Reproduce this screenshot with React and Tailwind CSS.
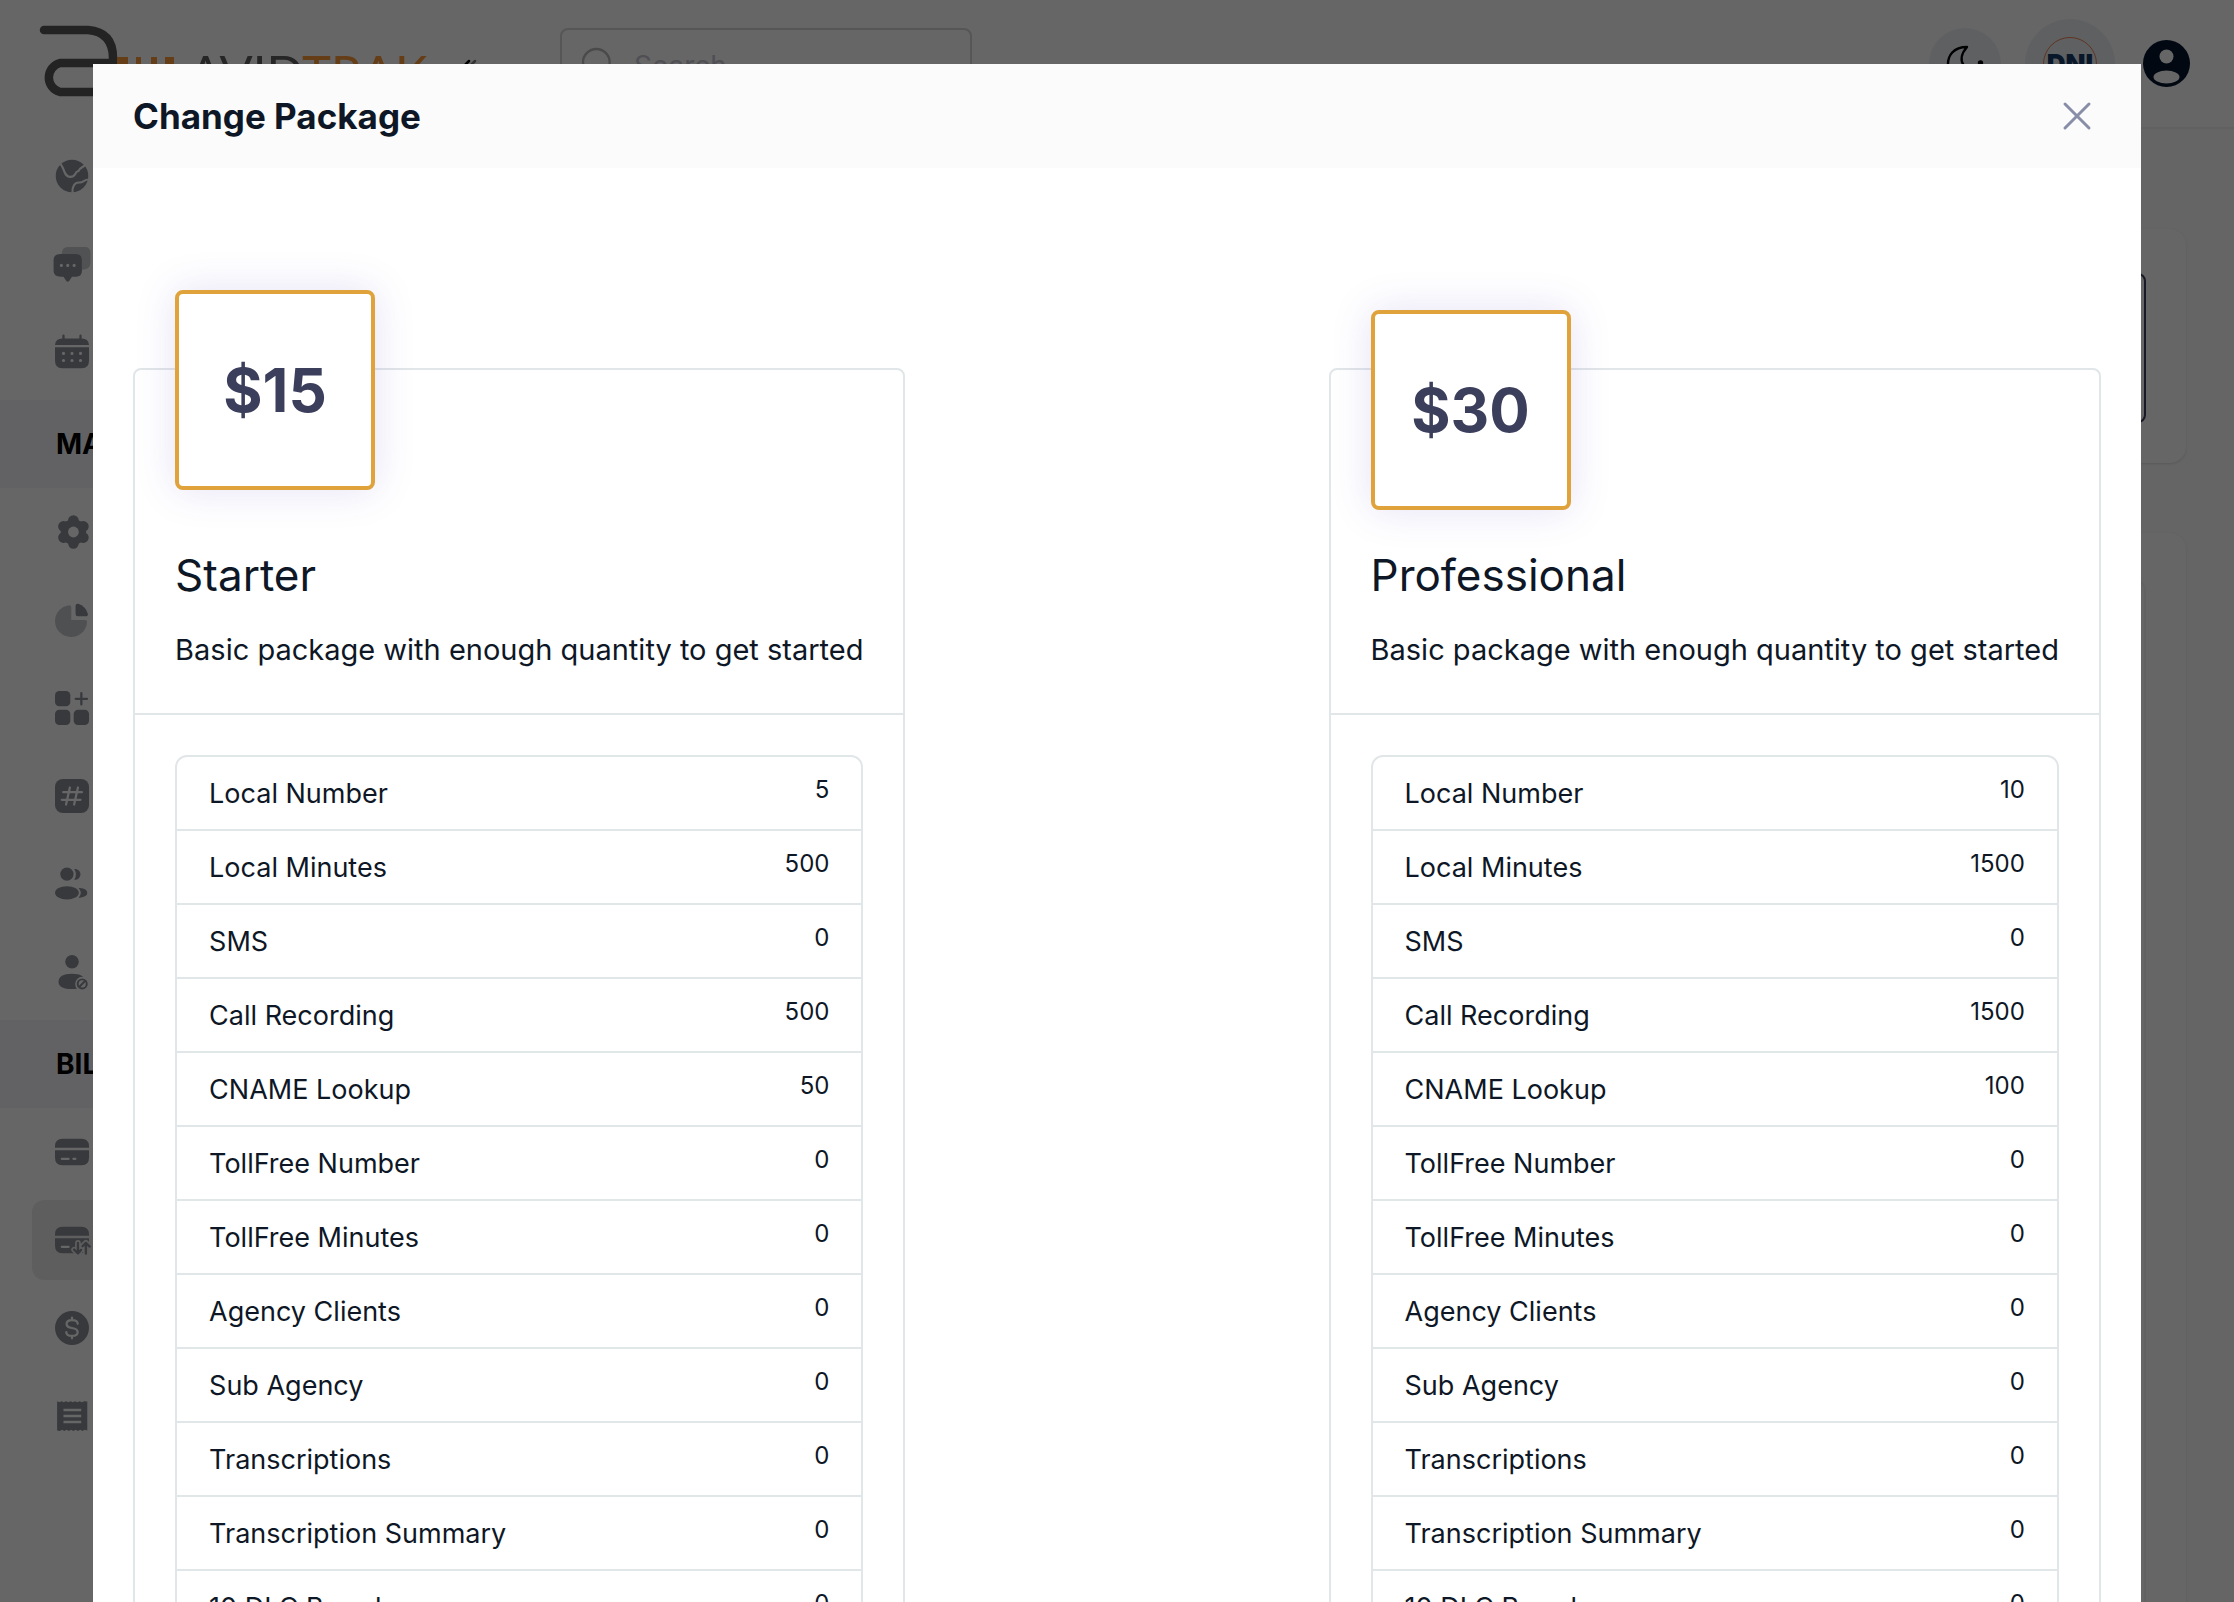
import { FiSearch, FiX } from 'react-icons/fi'

const LABELS = [
  'Local Number', 'Local Minutes', 'SMS', 'Call Recording', 'CNAME Lookup', 'TollFree Number',
  'TollFree Minutes', 'Agency Clients', 'Sub Agency', 'Transcriptions', 'Transcription Summary', '10 DLC Brand',
]

const PACKAGES = [
  { name: 'Starter', price: 15, values: [5, 500, 0, 500, 50, 0, 0, 0, 0, 0, 0, 0], lift: 'top-[-80px]' },
  { name: 'Professional', price: 30, values: [10, 1500, 0, 1500, 100, 0, 0, 0, 0, 0, 0, 0], lift: 'top-[-60px]' },
]

// cut-outs inside the filled icons take the sidebar colour
const CUT = '#ffffff'

const ARROWS = 'M16.2 14 V21 M13.5 18.8 L16.2 21.4 L18.4 19 M21.8 21.5 V14.2 M19.4 16.4 L21.8 14 L24.5 16.6'

const ICONS = {
  globe: (
    <>
      <circle cx="12" cy="12" r="11.5" fill="currentColor" />
      <path d="M2.8 2.5 C7 5 5.5 12.3 10.5 12.6 C15.5 12.8 13 9.5 16.5 8.5 C17.5 6 20 6 21.5 4" fill="none" stroke={CUT} strokeWidth="1.5" />
      <path d="M12.3 24 C12 19 14 16.5 17 16.6 C20.5 16.8 20 14.5 24 14.5" fill="none" stroke={CUT} strokeWidth="1.5" />
    </>
  ),
  chat: (
    <>
      <path d="M9 0 H21 Q25 0 25 4 V11 Q25 16 19 16 V9 Q19 5 15 5 H4.7 Q5 0 9 0 Z" fill="currentColor" opacity="0.45" />
      <path d="M4 5 H15 Q19 5 19 9 V17 Q19 21 15 21 H12 L10 24 Q9 25 8 24 L6 21 H4 Q-1 21 -1 17 V9 Q-1 5 4 5 Z" fill="currentColor" />
      <circle cx="4.5" cy="13" r="1.1" fill={CUT} />
      <circle cx="9" cy="13" r="1.1" fill={CUT} />
      <circle cx="13.5" cy="13" r="1.1" fill={CUT} />
    </>
  ),
  calendar: (
    <>
      <path d="M0 7 Q0.5 2.5 5 2.5 H19 Q23.5 2.5 24 7 Z" fill="currentColor" />
      <path d="M6 0.5 V4 M18 0.5 V4" stroke="currentColor" strokeWidth="1.6" strokeLinecap="round" />
      <path d="M0 8.6 H24 V18 Q24 23.5 19 23.5 H5 Q0 23.5 0 18 Z" fill="currentColor" />
      <g fill={CUT}>
        <circle cx="6" cy="13" r="1.1" /><circle cx="12" cy="13" r="1.1" /><circle cx="18" cy="13" r="1.1" />
        <circle cx="6" cy="18" r="1.1" /><circle cx="12" cy="18" r="1.1" /><circle cx="18" cy="18" r="1.1" />
      </g>
    </>
  ),
  gear: (
    <>
      <path d="M13 4 V20 M6 8 L20 16 M6 16 L20 8" stroke="currentColor" strokeWidth="7.6" strokeLinecap="round" />
      <circle cx="13" cy="12" r="9" fill="currentColor" />
      <circle cx="13" cy="12" r="3.8" fill={CUT} />
    </>
  ),
  pie: (
    <>
      <path d="M10 1.5 Q11.5 1.5 11.5 3 V12 H21 Q22.8 12 22.6 13.5 A11.3 11.3 0 1 1 10 1.5 Z" fill="currentColor" opacity="0.5" />
      <path d="M14.5 2 Q14.5 0.3 16.5 0.6 Q21.5 2.5 23.2 7.5 Q23.5 9.3 21.5 9.3 H16 Q14.5 9.3 14.5 7.5 Z" fill="currentColor" />
    </>
  ),
  grid: (
    <>
      <rect x="0" y="0" width="10.8" height="10.8" rx="3" fill="currentColor" />
      <rect x="0" y="13.2" width="10.8" height="10.8" rx="3" fill="currentColor" />
      <rect x="13.2" y="13.2" width="10.8" height="10.8" rx="3" fill="currentColor" />
      <path d="M18.6 1.5 V9.5 M14.6 5.5 H22.6" stroke="currentColor" strokeWidth="1.6" strokeLinecap="round" />
    </>
  ),
  hash: (
    <>
      <rect width="24" height="24" rx="5.5" fill="currentColor" />
      <path d="M5.8 9.3 H19 M4.8 14.7 H18 M10.5 6 L7.8 18 M16.2 6 L13.5 18" stroke={CUT} strokeWidth="1.6" strokeLinecap="round" />
    </>
  ),
  users: (
    <>
      <circle cx="8.4" cy="5" r="4.7" fill="currentColor" />
      <ellipse cx="8.4" cy="18.2" rx="8.4" ry="4.7" fill="currentColor" />
      <path d="M14.2 1.8 A3.4 3.4 0 0 1 14.2 8.6 Q16.2 5.2 14.2 1.8 Z M17.5 15.3 Q22.4 15.8 22.4 18.2 Q22.4 20.8 17.5 21.3 Q19.8 18.2 17.5 15.3 Z" fill="currentColor" stroke="currentColor" strokeWidth="0.8" />
    </>
  ),
  blocked: (
    <>
      <circle cx="12" cy="4.8" r="4.8" fill="currentColor" />
      <path d="M12 13.2 Q21 13.2 21 18.5 Q21 24 12 24 Q2.5 24 2.5 19 Q2.5 13.2 12 13.2 Z" fill="currentColor" />
      <circle cx="19.2" cy="20.4" r="5" fill={CUT} />
      <circle cx="19.2" cy="20.4" r="3.2" fill="none" stroke="currentColor" strokeWidth="1.4" />
      <path d="M17.2 22.4 L21.2 18.4" stroke="currentColor" strokeWidth="1.4" />
    </>
  ),
  card: (
    <>
      <path d="M0 9 V7.5 Q0.5 2.7 5 2.7 H19 Q23.5 2.7 24 7.5 V9 Z" fill="currentColor" />
      <path d="M0 10.7 H24 V16 Q24 21.3 19 21.3 H5 Q0 21.3 0 16 Z" fill="currentColor" />
      <path d="M4.8 16.8 H9.6 M13 16.8 H14.4" stroke={CUT} strokeWidth="1.6" strokeLinecap="round" />
    </>
  ),
  cardArrows: (
    <>
      <path d="M0 9 V7.5 Q0.5 2.7 5 2.7 H19 Q23.5 2.7 24 7.5 V9 Z" fill="currentColor" />
      <path d="M0 10.7 H24 V16 Q24 21.3 19 21.3 H5 Q0 21.3 0 16 Z" fill="currentColor" />
      <path d="M4.8 16.8 H9.6" stroke={CUT} strokeWidth="1.6" strokeLinecap="round" />
      <g fill="none" strokeLinecap="round" strokeLinejoin="round">
        <path d={ARROWS} stroke="#ececec" strokeWidth="4" />
        <path d={ARROWS} stroke="currentColor" strokeWidth="1.7" />
      </g>
    </>
  ),
  dollar: (
    <>
      <circle cx="12" cy="12" r="12" fill="currentColor" />
      <path d="M16 9 Q16 6.5 12 6.5 Q8.2 6.5 8.2 9.2 Q8.2 11.5 12 12 Q16 12.5 16 15 Q16 17.6 12 17.6 Q8 17.6 8 15 M12 4.7 V6.5 M12 17.6 V19.3" fill="none" stroke={CUT} strokeWidth="1.6" strokeLinecap="round" />
    </>
  ),
  receipt: (
    <>
      <path d="M1.5 1.5 L3 2.3 L4.6 1.5 L6.2 2.3 L7.8 1.5 L9.4 2.3 L11 1.5 L12.6 2.3 L14.2 1.5 L15.8 2.3 L17.4 1.5 L19 2.3 L20.6 1.5 L22.8 1.7 V22.3 L21 21.7 L19.4 22.5 L17.8 21.7 L16.2 22.5 L14.6 21.7 L13 22.5 L11.4 21.7 L9.8 22.5 L8.2 21.7 L6.6 22.5 L5 21.7 L3.4 22.5 L1.5 22.3 Z" fill="currentColor" />
      <path d="M6 7.7 H18.5 M6 12 H18.5 M6 16.3 H18.5" stroke={CUT} strokeWidth="1.8" />
    </>
  ),
}

const NAV = [
  { items: ['globe', 'chat', 'calendar'] },
  { title: 'MANAGE', items: ['gear', 'pie', 'grid', 'hash', 'users', 'blocked'] },
  { title: 'BILLING', items: ['card', 'cardArrows', 'dollar', 'receipt'] },
]

function NavItem({ name }) {
  const active = name === 'cardArrows'
  return (
    <li className="py-1 pl-8 pr-6">
      <a href="#" aria-label={name} className={`flex h-20 items-center rounded-xl pl-[23px] text-[#8b8f99] ${active ? 'bg-[#ececec]' : ''}`}>
        <svg viewBox="0 0 24 24" className="size-[34px] overflow-visible">{ICONS[name]}</svg>
      </a>
    </li>
  )
}

function Logo() {
  return (
    <svg viewBox="0 0 400 90" className="h-[90px] w-[400px] overflow-visible" fill="none">
      <path d="M8 10 H52 Q77 12 77 38 V43 H24 A15 15 0 0 0 24 72 H64" stroke="#575757" strokeWidth="8.5" strokeLinecap="round" />
      <path d="M81 37 H92 V60 H81 Z M100 37 H105 V60 H100 Z M115 37 H121 V60 H115 Z M129 37 H138 V60 H129 Z" fill="#fc9838" />
      <text x="153" y="71" fontSize="49" fontFamily="Lato, sans-serif" fill="#606060">AVID<tspan fill="#fc9838">TRAK</tspan></text>
    </svg>
  )
}

function Sidebar() {
  return (
    <aside className="w-[528px] shrink-0 bg-white shadow-[0_0_30px_rgba(140,140,190,0.3)]">
      <div className="flex h-[132px] items-start pl-9 pt-5">
        <Logo />
        <button aria-label="Collapse sidebar" className="ml-5 mt-8 text-black">
          <svg viewBox="0 0 24 24" className="size-6" fill="none" stroke="currentColor" strokeWidth="2.5" strokeLinecap="round">
            <path d="M13 9 L6 16 L13 23" />
            <path d="M19 9 L12 16 L19 23" opacity="0.5" />
          </svg>
        </button>
      </div>
      {NAV.map((group, i) => (
        <nav key={i}>
          {group.title && (
            <h3 className="mt-1 flex h-[88px] items-center bg-[#f4f6fb] pl-14 text-[28px] font-bold text-black">{group.title}</h3>
          )}
          <ul>
            {group.items.map((name) => <NavItem key={name} name={name} />)}
          </ul>
        </nav>
      ))}
    </aside>
  )
}

function TopBar() {
  return (
    <header className="flex h-[129px] items-center border-b-2 border-[#f3f3f3] bg-white pl-8 pr-11">
      <label className="flex h-[72px] w-[412px] items-center gap-4 rounded-lg border-2 border-[#d6d6d6] pl-4">
        <FiSearch className="size-10 shrink-0 text-[#b8b8b8]" strokeWidth={1.4} />
        <input type="search" placeholder="Search" className="w-full min-w-0 pt-1 text-[28px] outline-none placeholder:text-[#c6c6d2]" />
      </label>
      <div className="ml-auto flex items-center gap-6">
        <button aria-label="Toggle theme" className="flex size-18 items-center justify-center rounded-full bg-[#edf0f5] text-black">
          <svg viewBox="0 0 40 40" className="size-10" fill="none" stroke="currentColor" strokeWidth="2.4">
            <path d="M22 3 C8 3 3 12 3 20 C3 30 10 37 20 37 C28 37 34 32 36 26 C22 30 9 18 22 3 Z" strokeLinejoin="round" />
            <circle cx="35.5" cy="19" r="1.5" fill="currentColor" />
          </svg>
        </button>
        <button aria-label="DNI" className="flex size-[90px] items-center justify-center rounded-full bg-[#edf0f5]">
          <span className="flex size-[54px] items-center justify-center rounded-full border border-[#f08050] text-[26px] font-black text-[#163a66]">DNI</span>
        </button>
        <button aria-label="Account" className="ml-1 text-[#03142b]">
          <svg viewBox="0 0 47 47" className="size-[47px]">
            <circle cx="23.5" cy="23.5" r="23.5" fill="currentColor" />
            <circle cx="23.5" cy="16.5" r="7" fill="#fff" />
            <ellipse cx="23.5" cy="37" rx="13" ry="6.5" fill="#fff" />
          </svg>
        </button>
      </div>
    </header>
  )
}

function PackageCard({ name, price, values, lift }) {
  return (
    <section className="rounded-lg border-2 border-[#e1e6e8]">
      <div className="relative border-b-2 border-[#e1e6e8] px-10 pb-10 pt-[169px]">
        <div className={`absolute left-10 ${lift} flex size-50 items-center justify-center rounded-lg border-4 border-[#e0a23a] bg-white text-[60px] font-bold text-[#3b3f5c] shadow-[0_0_40px_rgba(80,60,190,0.15)]`}>
          ${price}
        </div>
        <h4 className="text-[44px] leading-[72px] text-[#0e1726]">{name}</h4>
        <p className="mt-4 whitespace-nowrap text-[29px] leading-[46px] text-[#0e1726]">Basic package with enough quantity to get started</p>
      </div>
      <div className="p-10">
        <ul className="divide-y-2 divide-[#e1e6e8] rounded-xl border-2 border-[#e1e6e8]">
          {LABELS.map((label, i) => (
            <li key={label} className="flex h-[74px] items-start justify-between px-8 pt-4 text-[#0e1726]">
              <span className="text-[27px] leading-[42px]">{label}</span>
              <span className="text-[24px] leading-[34px]">{values[i]}</span>
            </li>
          ))}
        </ul>
      </div>
    </section>
  )
}

function PackageModal() {
  return (
    <div className="fixed inset-0 overflow-hidden bg-black/60 pt-16">
      <div role="dialog" aria-label="Change Package" className="mx-auto w-11/12 bg-white">
        <div className="flex h-26 items-center justify-between bg-[#fbfbfb] px-10">
          <h2 className="text-[35px] font-bold text-[#0e1726]">Change Package</h2>
          <button aria-label="Close" className="text-[#888ea8]">
            <FiX className="size-12" strokeWidth={1.5} />
          </button>
        </div>
        <div className="flex items-start justify-between px-10 pb-10 pt-50">
          {PACKAGES.map((pkg) => <PackageCard key={pkg.name} {...pkg} />)}
        </div>
      </div>
    </div>
  )
}

export default function App() {
  return (
    <div className="flex h-screen overflow-hidden bg-[#fcfcfc] font-['Inter',sans-serif]">
      <Sidebar />
      <div className="min-w-0 flex-1">
        <TopBar />
        <main className="flex flex-col gap-[70px] px-12 py-[100px]">
          <section className="rounded-2xl bg-[#fefefe] px-10 pb-10 pt-11 shadow">
            <div className="h-[150px] rounded-lg border-2 border-[#3b3f5c]" />
          </section>
          <section className="h-screen rounded-2xl bg-[#fefefe] px-10 pt-12 shadow">
            <div className="h-full rounded-lg border-2 border-[#f5f5f5]" />
          </section>
        </main>
      </div>
      <PackageModal />
    </div>
  )
}
